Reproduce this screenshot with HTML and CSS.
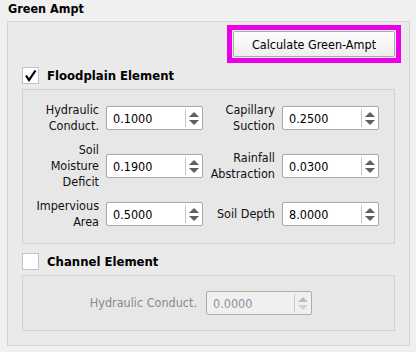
FILE: index.html
```html
<!DOCTYPE html>
<html lang="en">
<head>
  <meta charset="UTF-8" />
  <title>Green Ampt</title>
  <link rel="stylesheet" href="styles.css">
</head>
<body>

  <div class="title">Green Ampt</div>

  <div class="group">
    <div class="actions">
      <div class="highlight">
        <button class="btn">Calculate Green-Ampt</button>
      </div>
    </div>

    <label class="check-row">
      <span class="check">
        <svg width="15" height="15" viewBox="0 0 15 15"><polyline points="3,7.5 6,12 12.5,2.5" fill="none" stroke="#000" stroke-width="2.2"/></svg>
      </span>
      <span class="check-label">Floodplain Element</span>
    </label>

    <div class="panel">
      <div class="fields">
        <div class="lbl">Hydraulic<br>Conduct.</div>
        <div class="spin"><span class="val">0.1000</span><span class="arrows"><i class="up"></i><i class="down"></i></span></div>
        <div class="lbl">Capillary<br>Suction</div>
        <div class="spin"><span class="val">0.2500</span><span class="arrows"><i class="up"></i><i class="down"></i></span></div>

        <div class="lbl">Soil<br>Moisture<br>Deficit</div>
        <div class="spin"><span class="val">0.1900</span><span class="arrows"><i class="up"></i><i class="down"></i></span></div>
        <div class="lbl">Rainfall<br>Abstraction</div>
        <div class="spin"><span class="val">0.0300</span><span class="arrows"><i class="up"></i><i class="down"></i></span></div>

        <div class="lbl">Impervious<br>Area</div>
        <div class="spin"><span class="val">0.5000</span><span class="arrows"><i class="up"></i><i class="down"></i></span></div>
        <div class="lbl">Soil Depth</div>
        <div class="spin"><span class="val">8.0000</span><span class="arrows"><i class="up"></i><i class="down"></i></span></div>
      </div>
    </div>

    <label class="check-row second">
      <span class="check"></span>
      <span class="check-label">Channel Element</span>
    </label>

    <div class="panel channel">
      <div class="lbl disabled">Hydraulic Conduct.</div>
      <div class="spin disabled"><span class="val">0.0000</span><span class="arrows"><i class="up"></i><i class="down"></i></span></div>
    </div>
  </div>

</body>
</html>
```

FILE: styles.css
```css
body {
  margin: 0;
  background-color: #f0f0f0;
  color: #111;
  font-family: 'DejaVu Sans Condensed', 'DejaVu Sans', sans-serif;
  font-size: 12.5px;
}

.title {
  font-weight: bold;
  color: #000;
  padding: 1px 0 0 8px;
  height: 20px;
}

.group {
  width: 401px;
  height: 323px;
  margin-left: 7px;
  border: 1px solid #d4d4d4;
  background-color: #eaeaea;
}

.actions {
  display: flex;
  justify-content: flex-end;
  padding: 3px 8px 0 0;
}

.highlight {
  border: 5px solid #ea00e6;
  padding: 1px;
  background-color: #eaeaea;
}

.btn {
  display: block;
  width: 162px;
  height: 26px;
  font-family: inherit;
  font-size: 12.5px;
  color: #000;
  background: linear-gradient(#fdfdfd, #eeeeee);
  border: 1px solid #adadad;
  border-radius: 2px;
  padding: 0;
}

.check-row {
  display: flex;
  align-items: center;
  gap: 8px;
  margin: 3px 0 0 14px;
  height: 18px;
}

.check-row.second {
  margin-top: 8px;
}

.check {
  width: 15px;
  height: 15px;
  background-color: #fff;
  border: 1px solid #c2c2c2;
  display: flex;
}

.check-label {
  font-weight: bold;
  color: #000;
  font-size: 13px;
}

.panel {
  margin: 5px 14px 0 14px;
  border: 1px solid #d2d2d2;
  background-color: #e7e7e7;
  padding: 12px 0 13px 0;
}

.fields {
  display: grid;
  grid-template-columns: 76px 97px 65px 97px;
  column-gap: 7px;
  row-gap: 8px;
  align-items: center;
}

.lbl {
  text-align: right;
  line-height: 16px;
}

.spin {
  display: flex;
  height: 22px;
  background-color: #fff;
  border: 1px solid #a9a9a9;
  border-radius: 2px;
}

.val {
  flex: 1;
  display: flex;
  align-items: center;
  padding-left: 6px;
  color: #000;
}

.arrows {
  width: 16px;
  border-left: 1px solid #c8c8c8;
  margin: 2px 0;
  display: flex;
  flex-direction: column;
  align-items: center;
  justify-content: center;
  gap: 3px;
}

.arrows i {
  width: 0;
  height: 0;
  border-left: 5px solid transparent;
  border-right: 5px solid transparent;
}

.arrows .up {
  border-bottom: 5px solid #5f5f5f;
}

.arrows .down {
  border-top: 5px solid #5f5f5f;
}

.channel {
  display: flex;
  align-items: center;
  justify-content: flex-end;
  gap: 9px;
  height: 28px;
  padding: 13px 82px 13px 0;
}

.lbl.disabled {
  color: #8a8a8a;
}

.spin.disabled {
  width: 104px;
  background-color: #f0f0f0;
  border-color: #adadad;
}

.spin.disabled .val {
  color: #8d90a2;
}

.spin.disabled .up {
  border-bottom-color: #bcbcbc;
}

.spin.disabled .down {
  border-top-color: #d0d0d0;
}
```
